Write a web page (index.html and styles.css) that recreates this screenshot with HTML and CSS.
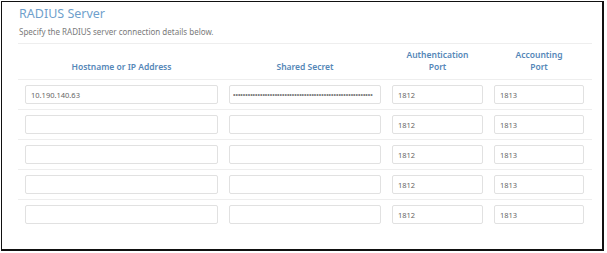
FILE: index.html
```html
<!DOCTYPE html>
<html lang="en">
  <head>
    <meta charset="UTF-8" />
    <title>RADIUS Server</title>
    <link rel="stylesheet" href="styles.css">
  </head>
  <body>
    <div class="frame">
      <div class="panel">
        <div class="intro">
          <h2 class="title">RADIUS Server</h2>
          <p class="subtitle">Specify the RADIUS server connection details below.</p>
        </div>

        <div class="grid head">
          <div class="col-label">Hostname or IP Address</div>
          <div class="col-label">Shared Secret</div>
          <div class="col-label">Authentication<br>Port</div>
          <div class="col-label">Accounting<br>Port</div>
        </div>

        <div class="grid row">
          <input class="field" type="text" value="10.190.140.63" />
          <input class="field secret" type="password" value="xxxxxxxxxxxxxxxxxxxxxxxxxxxxxxxxxxxxxxxxxxxxxxxxxxxxxxxxx" />
          <input class="field" type="text" value="1812" />
          <input class="field" type="text" value="1813" />
        </div>
        <div class="grid row">
          <input class="field" type="text" value="" />
          <input class="field" type="password" value="" />
          <input class="field" type="text" value="1812" />
          <input class="field" type="text" value="1813" />
        </div>
        <div class="grid row">
          <input class="field" type="text" value="" />
          <input class="field" type="password" value="" />
          <input class="field" type="text" value="1812" />
          <input class="field" type="text" value="1813" />
        </div>
        <div class="grid row">
          <input class="field" type="text" value="" />
          <input class="field" type="password" value="" />
          <input class="field" type="text" value="1812" />
          <input class="field" type="text" value="1813" />
        </div>
        <div class="grid row last">
          <input class="field" type="text" value="" />
          <input class="field" type="password" value="" />
          <input class="field" type="text" value="1812" />
          <input class="field" type="text" value="1813" />
        </div>
      </div>
    </div>
  </body>
</html>
```

FILE: styles.css
```css
* {
  margin: 0;
  padding: 0;
  box-sizing: border-box;
}

body {
  background: #fff;
  font-family: "Noto Sans", "Open Sans", sans-serif;
  color: #666;
}

.frame {
  margin: 1px 0 0 1px;
  width: 603px;
  height: 250px;
  border-top: 1px solid #111;
  border-left: 1px solid #111;
  border-right: 2px solid #111;
  border-bottom: 2px solid #111;
}

.panel {
  width: 590px;
  padding: 5px 0 0 16px;
}

.intro {
  padding-bottom: 5px;
  border-bottom: 1px solid #eeeeee;
}

.title {
  font-size: 12.5px;
  line-height: 14px;
  font-weight: 400;
  color: #6f9fcc;
  margin-left: 1px;
}

.subtitle {
  font-size: 8px;
  line-height: 12px;
  color: #7a7a7a;
  margin-top: 5px;
  margin-left: 1px;
}

.grid {
  display: grid;
  grid-template-columns: 193px 152px 91px 90px;
  column-gap: 11px;
  padding: 0 7px;
  border-bottom: 1px solid #eeeeee;
}

.head {
  padding-top: 5px;
  padding-bottom: 6px;
  align-items: end;
}

.col-label {
  text-align: center;
  font-size: 8.5px;
  line-height: 12px;
  font-weight: 600;
  color: #5587b8;
}

.row {
  padding-top: 5px;
  padding-bottom: 5px;
}

.row.last {
  border-bottom: none;
}

.field {
  display: block;
  width: 100%;
  height: 19px;
  padding: 0 5px;
  border: 1px solid #e1e1e1;
  border-radius: 2px;
  background: #fff;
  font-family: "Noto Sans", "Open Sans", sans-serif;
  font-size: 7.5px;
  color: #666;
  outline: none;
}

.secret {
  font-family: "Liberation Sans", sans-serif;
  font-size: 7px;
  color: #777;
  padding: 0 3px;
}
```
